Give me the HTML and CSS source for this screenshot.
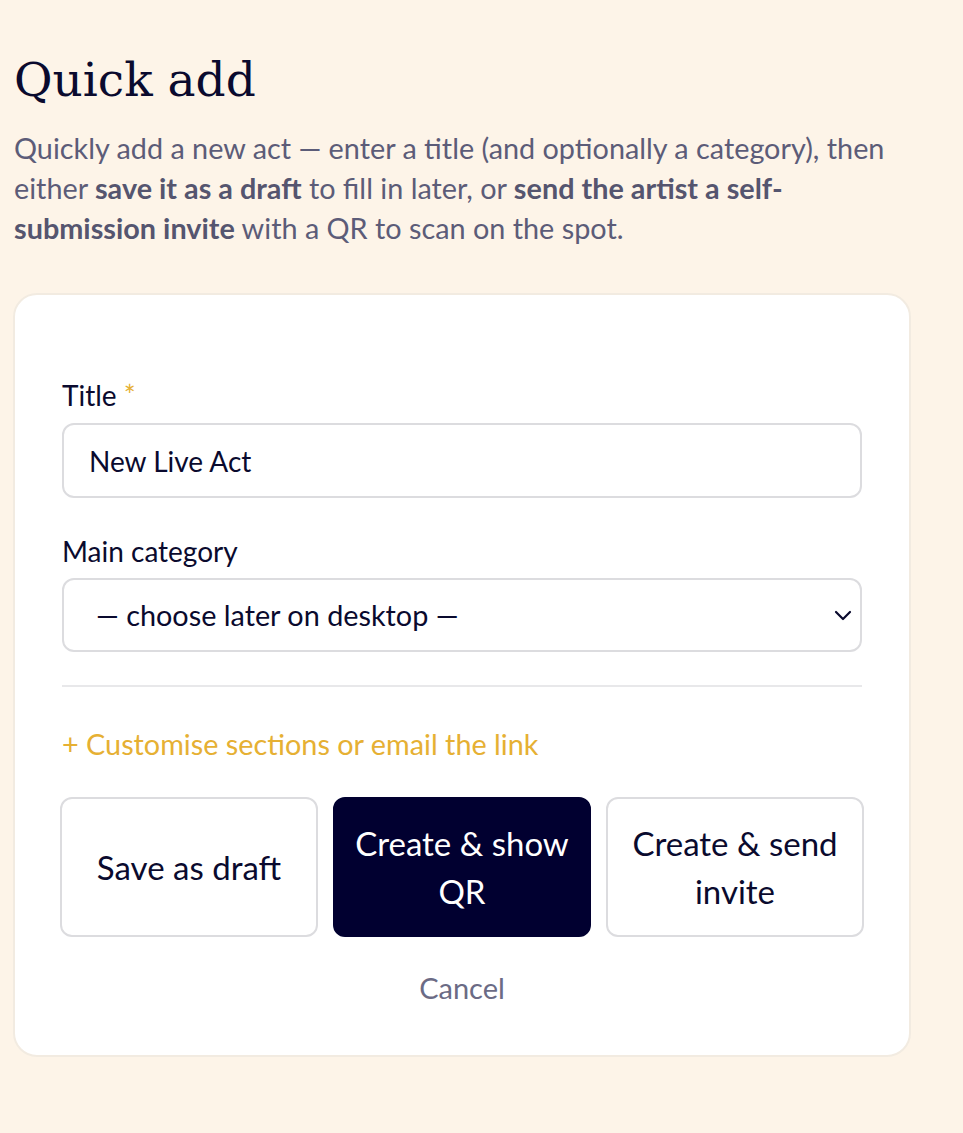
FILE: index.html
```html
<!DOCTYPE html>
<html lang="en">
<head>
<meta charset="utf-8">
<title>Quick add</title>
<link rel="stylesheet" href="styles.css">
</head>
<body>
<main class="page">
  <h1 class="title">Quick add</h1>
  <p class="intro">Quickly add a new act — enter a title (and optionally a category), then either <strong>save it as a draft</strong> to fill in later, or <strong>send the artist a self-submission invite</strong> with a QR to scan on the spot.</p>
  <section class="card">
    <div class="field">
      <label class="label" for="title">Title <span class="req">*</span></label>
      <input class="input" id="title" type="text" value="New Live Act">
    </div>
    <div class="field field-cat">
      <label class="label" for="cat">Main category</label>
      <div class="select" id="cat">
        <span class="select-text">— choose later on desktop —</span>
        <svg class="chev" width="18" height="12" viewBox="0 0 18 12"><path d="M2 3 L9 10 L16 3" fill="none" stroke="#0a0a2e" stroke-width="2.2" stroke-linecap="round" stroke-linejoin="round"/></svg>
      </div>
    </div>
    <hr class="divider">
    <div class="customise">+ Customise sections or email the link</div>
    <div class="actions">
      <button class="btn">Save as draft</button>
      <button class="btn btn-dark">Create &amp; show QR</button>
      <button class="btn">Create &amp; send invite</button>
    </div>
    <div class="cancel">Cancel</div>
  </section>
</main>
</body>
</html>
```

FILE: styles.css
```css
html, body {
  margin: 0;
  padding: 0;
  background: #fdf4e8;
}
body {
  font-family: "Lato", "Open Sans", sans-serif;
  color: #0a0a2e;
}
.page {
  width: 898px;
  padding: 43px 0 60px 13px;
}
.title {
  margin: 0 0 0 1px;
  font-family: "DejaVu Serif", serif;
  font-weight: 400;
  font-size: 47px;
  line-height: 74px;
  color: #0a0a2e;
}
.intro {
  margin: 11px 0 0 1px;
  font-size: 28.8px;
  line-height: 40px;
  color: #5c5c78;
}
.intro strong {
  font-weight: 700;
  color: #55556f;
}
.card {
  margin-top: 45px;
  background: #fff;
  border: 2px solid #f2ebe1;
  border-radius: 24px;
  padding: 83px 47px 50px 47px;
  display: flex;
  flex-direction: column;
}
.field {
  display: flex;
  flex-direction: column;
  gap: 11px;
  margin-bottom: 36px;
}
.field-cat {
  gap: 10px;
  margin-bottom: 33px;
}
.label {
  font-size: 28px;
  line-height: 34px;
  color: #0a0a2e;
}
.req {
  color: #e6b033;
}
.input, .select {
  box-sizing: border-box;
  height: 75px;
  border: 2px solid #dcdcdf;
  border-radius: 12px;
  background: #fff;
  font-family: inherit;
  font-size: 28px;
  color: #0a0a2e;
  padding: 0 25px;
  width: 100%;
}
.select {
  height: 74px;
  display: flex;
  align-items: center;
  justify-content: space-between;
  padding: 0 8px 0 32px;
  font-size: 28.8px;
}
.divider {
  border: 0;
  border-top: 2px solid #e8e8ea;
  margin: 0;
}
.customise {
  margin-top: 40px;
  font-size: 28.8px;
  line-height: 34px;
  color: #e6b033;
}
.actions {
  margin-top: 36px;
  display: grid;
  grid-template-columns: 1fr 1fr 1fr;
  gap: 15px;
  margin-left: -2px;
  margin-right: -2px;
}
.btn {
  height: 140px;
  box-sizing: border-box;
  border: 2px solid #dcdcdf;
  border-radius: 12px;
  background: #fff;
  font-family: inherit;
  font-size: 33px;
  line-height: 48px;
  color: #0a0a2e;
  padding: 0 14px;
}
.btn-dark {
  background: #010030;
  border-color: #010030;
  color: #fff;
}
.cancel {
  margin-top: 34px;
  text-align: center;
  font-size: 29px;
  line-height: 34px;
  color: #6b6b85;
}
```
